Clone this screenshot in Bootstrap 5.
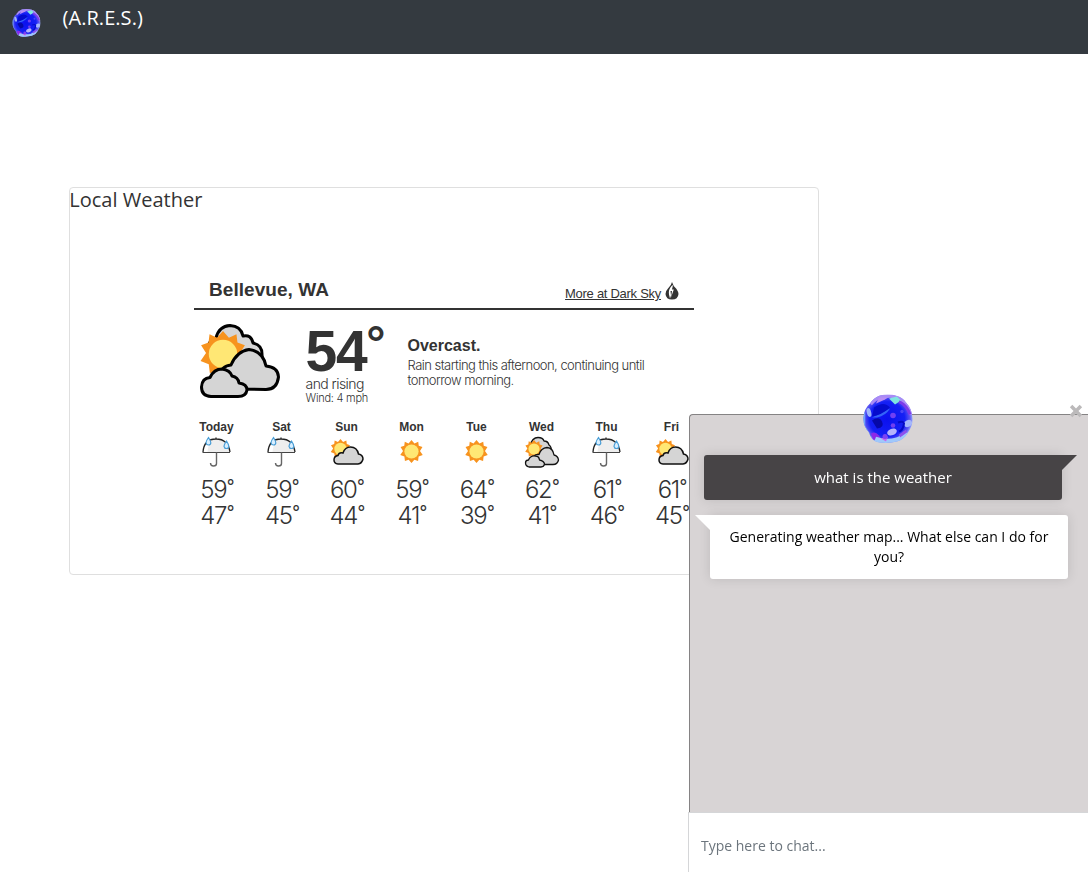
<!DOCTYPE html>
<html lang="en">
<head>
<meta charset="utf-8">
<meta name="viewport" content="width=device-width, initial-scale=1">
<title>A.R.E.S.</title>
<link href="https://cdn.jsdelivr.net/npm/bootstrap@5.3.0/dist/css/bootstrap.min.css" rel="stylesheet">
<style>
  body { font-family: "Open Sans", sans-serif; background: #fff; overflow: hidden; height: 100vh; }
  .topbar { height: 54px; background: #343a40; padding: 9px 0 0 12px; }
  .brand-name { font-size: 20px; line-height: 30px; margin: -6px 0 0 21.5px; letter-spacing: .05px; }
  .weather-card { width: 750px; height: 388px; margin: 133px 0 0 69px; border: 1px solid #dfdfdf; border-radius: 4px; color: #333; }
  .weather-card h1 { font-size: 20px; line-height: 24px; color: #333; text-indent: -.7px; }
  .forecast { width: 500px; margin: 65px 0 0 124px; font-family: "Liberation Sans", Arial, sans-serif; color: #333; }
  .forecast-head { height: 33px; border-bottom: 2px solid #333; padding: 0 15px; }
  .place { font-size: 19px; line-height: 26px; letter-spacing: .05px; }
  .more { font-size: 13px; line-height: 16px; color: #333; letter-spacing: -.28px; margin-top: 9px; }
  .thin { font-family: Inter, "Liberation Sans", sans-serif; font-weight: 300; }
  .now { height: 108px; }
  .now-icon { width: 82px; height: 76px; margin: 13px 0 0 5px; }
  .reading { width: 102px; margin-left: 24.5px; padding-top: 10px; }
  .temp { font-size: 57px; line-height: 63px; height: 56px; letter-spacing: -1.3px; white-space: nowrap; }
  .temp span { font-size: 48px; position: relative; top: -11px; left: 0; }
  .trend { font-size: 14px; line-height: 15px; height: 16px; letter-spacing: -.55px; }
  .wind { font-size: 11px; line-height: 13px; letter-spacing: -.24px; }
  .summary { padding-top: 26px; width: 260px; }
  .summary strong { display: block; font-size: 16px; line-height: 20px; }
  .summary p { font-size: 13px; line-height: 15px; margin: 2px 0 0; letter-spacing: -.53px; }
  .days { width: 520px; margin-left: -10px; }
  .day { width: 65px; height: 112px; }
  .day b { font-size: 12px; line-height: 18px; }
  .day svg { width: 36px; height: 34px; margin-bottom: 7px; }
  .day div { font-size: 24px; line-height: 26px; letter-spacing: -1.3px; height: 26px; white-space: nowrap; }
  .day div span { font-size: 17px; line-height: 17px; position: relative; top: -6px; left: .5px; font-weight: 400; }
  .chat { right: 0; bottom: 0; width: 400px; height: 458px; }
  .chat-log { height: 398px; margin-left: 1px; background: #d8d4d5; border: 1px solid #858384; border-width: 1px 0 0 1px; border-top-left-radius: 4px; padding: 40px 0 0 14px; }
  .msg { width: 358px; border-radius: 3px; font-size: 14px; line-height: 20px; text-align: center; box-shadow: 0 0 12px rgba(0,0,0,.12); position: relative; }
  .msg::before { content: ""; position: absolute; top: 0; width: 15px; height: 15px; }
  .msg-user { height: 45px; padding-top: 12px; background: #474446; color: #fff; border-top-right-radius: 0; font-size: 15px; }
  .msg-user::before { left: 100%; background: #474446; clip-path: polygon(0 0, 100% 0, 0 100%); }
  .msg-bot { height: 64px; margin: 15px 0 0 6px; padding: 12px 14px; background: #fff; color: #000; border-top-left-radius: 0; }
  .msg-bot::before { right: 100%; background: #fff; clip-path: polygon(0 0, 100% 0, 100% 100%); }
  .chat-orb { left: 175px; top: -20px; width: 50px; height: 50px; }
  .chat-close { left: 381px; top: -10px; width: 14px; height: 14px; }
  .chat-input { height: 60px; border: 1px solid #d5d6d8; border-width: 1px 0 0 1px; border-radius: 0; padding: 5px 0 0 12px; font-size: 14px; }
  .chat-input::placeholder { color: #6c757d; }
  .chat-input:focus { box-shadow: none; }
</style>
</head>
<body>
<svg width="0" height="0" class="position-absolute" aria-hidden="true">
  <defs>
    <radialGradient id="orbFill" cx=".48" cy=".5" r=".52">
      <stop offset="0" stop-color="#0b10ee"/><stop offset=".68" stop-color="#1520f5"/><stop offset=".88" stop-color="#5c55f2"/><stop offset="1" stop-color="#9fb6fa"/>
    </radialGradient>
    <clipPath id="orbClip"><path d="M17 1Q26-1 34 1.500 40 3 43 8 49 14 49.500 24 50 31 45 38 41 45 34 47 24 49.500 14 47.500 8 46 6 38 0 32 .500 23 1 14 7 9 11 3 17 1Z"/></clipPath>
    <symbol id="orb" viewBox="0 0 50 49">
      <g clip-path="url(#orbClip)">
        <rect width="50" height="49" fill="url(#orbFill)"/>
        <path d="M7 9Q14 1 20 2 28-1 35 3 45 8 49 20" fill="none" stroke="#a98bf5" stroke-width="5"/>
        <path d="M26 4l8-2 4 4-6 4z" fill="#7fe6e0"/>
        <path d="M16 3l9 0-3 2-9 4z" fill="#b98df4"/>
        <path d="M36 7q8 4 11 13" fill="none" stroke="#7c3bea" stroke-width="3"/>
        <path d="M8 39q4-3 8 2l3 6-9-2z" fill="#8c28e8"/>
        <path d="M12 45q11 4 22 1 7-3 10-8" fill="none" stroke="#9fc8fb" stroke-width="6"/>
        <path d="M18 44l7-2-2 5z" fill="#c765ee"/>
        <path d="M36 40l7-5 1 3-7 5z" fill="#8d50ee"/>
        <path d="M1 18v14l5 8" fill="none" stroke="#6ea4fa" stroke-width="2.500"/>
        <path d="M9 23l18-9q-4 7-13 9z" fill="#3464f8"/>
        <path d="M9 26q7-5 10 1t-5 7z" fill="#0608a8"/>
        <path d="M11 13q10-7 16 0-9 8-18 9z" fill="#050ccd"/>
        <ellipse cx="6" cy="18" rx="2.200" ry="4.500" fill="#9fb4fa" transform="rotate(-15 6 18)"/>
        <ellipse cx="29" cy="37.500" rx="5" ry="3.300" fill="#b4b4fb" transform="rotate(-20 29 37.500)"/>
        <ellipse cx="45" cy="29" rx="4.200" ry="3.300" fill="#a5b7fc" transform="rotate(-25 45 29)"/>
        <circle cx="30" cy="21" r="2.800" fill="#7040f3"/><circle cx="30" cy="31" r="2.300" fill="#713ff0"/>
        <circle cx="39" cy="17" r="1.700" fill="#4b46f6"/><circle cx="22" cy="42" r="2.500" fill="#7b42f2"/>
        <path d="M35 28q5-2 6 1-1 7-5 8" fill="none" stroke="#060bc5" stroke-width="2"/>
      </g>
    </symbol>
    <symbol id="star" viewBox="-21 -21 42 42">
      <path fill="#f7931e" d="M0-21L5.4-14.8 12.3-18 13.2-10.5 20-8 15.5-1 20.5 6.5 13 9.3 12 17.5 5.2 15 0 21-5.2 15-12 17.5-13 9.3-20.5 6.5-15.5-1-20-8-13.2-10.5-12.3-18-5.4-14.8Z"/>
      <circle r="13" fill="#ffe774"/>
    </symbol>
    <symbol id="overcast" viewBox="0 0 82 76">
      <g fill="#d5d5d5" stroke="#000" stroke-linejoin="round">
        <path stroke-width="3" d="M9 24Q10 18 17 15 20 3 31 2.500 42 3 44 13 52 11 54 20 63 22 63 31V40H14Z"/>
        <use href="#star" x="1" y="8" width="46" height="46" stroke="none"/>
        <path stroke-width="3" d="M29 66Q19 59 22 52 22 43 32 42 38 28 50 26.500 64 28 67 43 79 44 79.500 54 78 66.500 67 66.500Z"/>
        <path stroke-width="3" d="M12 73.500Q2.500 73 2.500 64 3 55 11 54.500 15 46 23 46 31 47 33 53 39 54 40 60 48 61 48 67 47 73.500 39 73.500Z"/>
      </g>
    </symbol>
    <symbol id="overcastSmall" viewBox="0 0 36 34">
      <g fill="#d5d5d5" stroke="#111" stroke-width="1.300" stroke-linejoin="round">
        <path d="M6 10Q8 1.500 14 1.500 19 1.500 20 5 24 5 25 9 28 11 27 16H8Z"/>
        <use href="#star" x="1" y="3" width="18" height="20" stroke="none"/>
        <path d="M13 28.500Q8 26 10 20 12 18 15 18.500 17 12 23 11.500 29 12 30 19 34 20 34.500 24 33.500 28.500 29 28.500Z"/>
        <path d="M5 31Q1.500 30 1.500 27 1.500 24 4.500 24 6.500 19 11.500 20 15 20 15.500 24 20 25 20.500 28 20 31 17 31Z"/>
      </g>
    </symbol>
    <symbol id="partly" viewBox="0 0 36 34">
      <use href="#star" x="1.500" y="3" width="20" height="20"/>
      <path fill="#d5d5d5" stroke="#111" stroke-width="1.500" d="M9 28Q5 27.500 5 24 5 20 9 19.500 10 16 14 17 16 11 21.500 11 28 11 29.500 18 34 19 34 23 33 27.500 29 28Z"/>
    </symbol>
    <symbol id="sunny" viewBox="0 0 36 34"><use href="#star" x="6" y="4" width="23" height="23"/></symbol>
    <symbol id="umbrella" viewBox="0 0 36 34">
      <g transform="translate(-1 -2)">
      <path fill="#eee" d="M5 18Q6 5 18 5 30 5 32 18Z"/>
      <path fill="#fff" d="M5 18Q6 8 14 6 10 10 9.500 18Z"/>
      <path fill="none" stroke="#222" stroke-width="1.300" d="M5 18Q6 5 18 5 30 5 32 18M18 3.500V5"/>
      <path fill="none" stroke="#444" stroke-width="1" d="M4.500 18.500H32"/>
      <path fill="none" stroke="#666" stroke-width="1.400" d="M18.500 18.500V29.500Q18.500 32 15.500 32 12.500 32 12.500 29"/>
      <path id="drop" fill="#d9efff" stroke="#4a9ed6" stroke-width="1.200" d="M10.500 3.500Q8 7 8 8.800 8.400 11 10.500 11 12.800 11 12.800 8.800 12.800 7 10.500 3.500Z"/>
      <use href="#drop" x="18" y="3.500"/>
      </g>
    </symbol>
  </defs>
</svg>

<nav class="topbar d-flex align-items-start text-white">
  <svg width="29" height="28" aria-hidden="true"><use href="#orb"/></svg>
  <span class="brand-name">(A.R.E.S.)</span>
</nav>

<main>
  <section class="weather-card bg-white">
    <h1 class="m-0 fw-normal">Local Weather</h1>
    <div class="forecast">
      <div class="forecast-head d-flex justify-content-between">
        <strong class="place">Bellevue, WA</strong>
        <div class="d-flex align-items-start">
          <a class="more" href="#">More at Dark Sky</a>
          <svg width="14" height="19" viewBox="0 0 14 19" class="ms-1 mt-1" aria-hidden="true">
            <path fill="#333" d="M7 1Q8 5 11.500 8 13.500 11 13.500 13 13 18.500 7 18.500 1 18.500 .500 13 .500 10 3 7.500 6.500 4 7 1Z"/>
            <path fill="#fff" d="M6.500 5Q3 9 4 13.500L5 17.500 6 14.500 5.500 10 7 10 6 16.500 8.800 8.500 7 8.500 8 4Z"/>
          </svg>
        </div>
      </div>
      <div class="now d-flex">
        <svg class="now-icon flex-shrink-0"><use href="#overcast"/></svg>
        <div class="reading flex-shrink-0">
          <div class="temp fw-bold">54<span>°</span></div>
          <div class="trend thin">and rising</div>
          <div class="wind thin">Wind: 4 mph</div>
        </div>
        <div class="summary">
          <strong>Overcast.</strong>
          <p class="thin">Rain starting this afternoon, continuing until<br>tomorrow morning.</p>
        </div>
      </div>
      <div class="days d-flex text-center">
        <div class="day d-flex flex-column align-items-center"><b>Today</b><svg><use href="#umbrella"/></svg><div class="thin">59<span>°</span></div><div class="thin">47<span>°</span></div></div>
        <div class="day d-flex flex-column align-items-center"><b>Sat</b><svg><use href="#umbrella"/></svg><div class="thin">59<span>°</span></div><div class="thin">45<span>°</span></div></div>
        <div class="day d-flex flex-column align-items-center"><b>Sun</b><svg><use href="#partly"/></svg><div class="thin">60<span>°</span></div><div class="thin">44<span>°</span></div></div>
        <div class="day d-flex flex-column align-items-center"><b>Mon</b><svg><use href="#sunny"/></svg><div class="thin">59<span>°</span></div><div class="thin">41<span>°</span></div></div>
        <div class="day d-flex flex-column align-items-center"><b>Tue</b><svg><use href="#sunny"/></svg><div class="thin">64<span>°</span></div><div class="thin">39<span>°</span></div></div>
        <div class="day d-flex flex-column align-items-center"><b>Wed</b><svg><use href="#overcastSmall"/></svg><div class="thin">62<span>°</span></div><div class="thin">41<span>°</span></div></div>
        <div class="day d-flex flex-column align-items-center"><b>Thu</b><svg><use href="#umbrella"/></svg><div class="thin">61<span>°</span></div><div class="thin">46<span>°</span></div></div>
        <div class="day d-flex flex-column align-items-center"><b>Fri</b><svg><use href="#partly"/></svg><div class="thin">61<span>°</span></div><div class="thin">45<span>°</span></div></div>
      </div>
    </div>
  </section>
</main>

<aside class="chat position-fixed">
  <div class="chat-log">
    <div class="msg msg-user">what is the weather</div>
    <div class="msg msg-bot">Generating weather map... What else can I do for you?</div>
  </div>
  <input class="chat-input form-control" type="text" placeholder="Type here to chat..." aria-label="Chat message">
  <svg class="chat-orb position-absolute" aria-hidden="true"><use href="#orb"/></svg>
  <svg class="chat-close position-absolute" viewBox="0 0 12 12" role="button" aria-label="Close"><path d="M1.800 1.800L10.200 10.200M10.200 1.800L1.800 10.200" stroke="#bbb9ba" stroke-width="3"/></svg>
</aside>
<script src="https://cdn.jsdelivr.net/npm/bootstrap@5.3.0/dist/js/bootstrap.bundle.min.js"></script>
</body>
</html>
